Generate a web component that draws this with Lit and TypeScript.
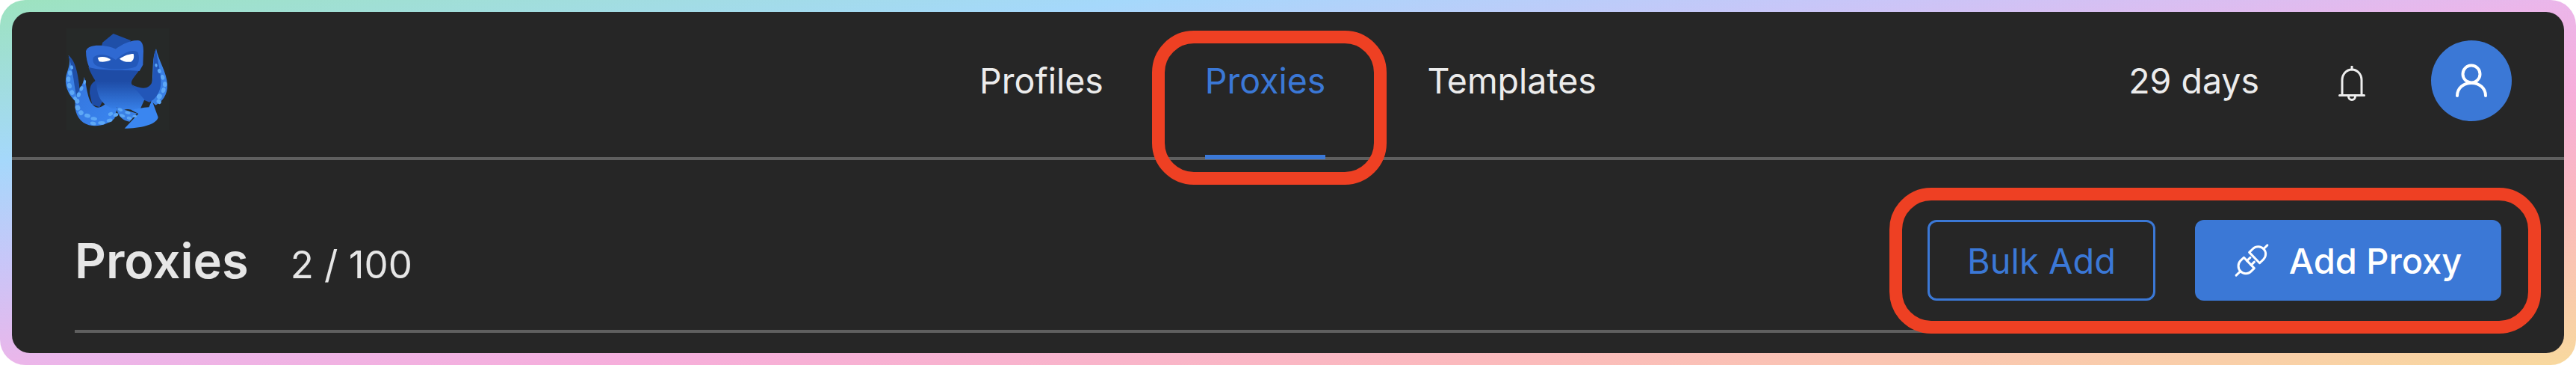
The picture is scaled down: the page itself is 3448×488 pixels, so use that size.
import { LitElement, css, html, svg } from 'lit';
import { customElement } from 'lit/decorators.js';

// sucker dots of the logo tentacles: [cx, cy, rx, ry, rotation]
const SUCKERS: number[][] = [
  [108, 180, 6, 8, -15], [101, 203, 8, 10, -5], [95, 228, 8, 11, 0], [99, 254, 9, 11, -15], [109, 281, 9, 10, -25],
  [122, 305, 7, 8, -35], [160, 240, 5, 9, 10], [147, 265, 7, 10, 20], [136, 290, 8, 10, 15], [130, 316, 9, 10, 0],
  [132, 342, 10, 11, -15], [145, 362, 10, 10, -35], [171, 374, 12, 8, 15], [197, 386, 13, 7, 10], [228, 403, 14, 7, 0],
  [194, 405, 12, 7, 15], [260, 393, 12, 7, -15], [285, 371, 10, 7, -25], [264, 367, 10, 7, -25],
  [303, 350, 10, 6, 25], [311, 374, 11, 6, 20], [333, 362, 11, 6, 15], [339, 384, 10, 6, 15], [361, 376, 9, 5, 0],
  [447, 172, 5, 7, -10], [460, 195, 7, 9, -20], [473, 220, 8, 10, -15], [482, 248, 8, 10, 0], [476, 272, 8, 11, 15],
  [460, 297, 10, 11, 30], [458, 318, 10, 8, 40],
];

@customElement('app-root')
export class AppRoot extends LitElement {
  static styles = css`
    :host {
      display: block;
      width: 3448px;
      height: 488px;
      box-sizing: border-box;
      padding: 16px;
      border-radius: 34px;
      background: linear-gradient(to bottom right, #9de3bf 0%, #a5d8fb 22%, #c8c6f8 36%, #ebb6ea 50%, #f6aedb 62%, #fbb9bd 78%, #f8d99e 100%);
      font-family: Inter, 'Liberation Sans', sans-serif;
      color: #ececec;
    }
    .panel {
      position: relative;
      height: 456px;
      border-radius: 24px;
      background: #262626;
      overflow: hidden;
    }
    .top {
      box-sizing: border-box;
      display: grid;
      grid-template-columns: minmax(0, 1fr) auto minmax(0, 1fr);
      height: 198px;
      padding: 38px 44px 0;
      border-bottom: 4px solid #5f5f5f;
    }
    .logo {
      display: block;
      margin-top: -24px;
    }
    .nav {
      display: flex;
      gap: 136px;
    }
    .nav a {
      box-sizing: border-box;
      height: 159px;
      line-height: 108px;
      font-size: 46.5px;
      border-bottom: 6px solid transparent;
    }
    .nav a.active {
      color: #3b78d6;
      border-bottom-color: #3b78d6;
    }
    .meta {
      display: flex;
      justify-content: flex-end;
      align-items: flex-start;
      padding-right: 26px;
      line-height: 108px;
      font-size: 46.5px;
    }
    .bell {
      display: block;
      margin: 34px 88px 0 106px;
    }
    .avatar {
      display: flex;
      align-items: center;
      justify-content: center;
      width: 108px;
      height: 108px;
      border-radius: 50%;
      background: #3b78d6;
    }
    .content {
      margin: 0 84px;
      padding: 80px 0 39px;
      border-bottom: 4px solid #5f5f5f;
      display: flex;
      align-items: center;
      justify-content: space-between;
    }
    .title {
      display: flex;
      align-items: baseline;
      gap: 56px;
      color: #e6e6e6;
    }
    h1 {
      margin: 0;
      font-size: 65px;
      font-weight: 600;
    }
    .count {
      font-size: 51px;
    }
    .actions {
      display: flex;
      gap: 53px;
    }
    .btn {
      box-sizing: border-box;
      display: flex;
      align-items: center;
      justify-content: center;
      gap: 27px;
      height: 108px;
      border-radius: 12px;
      font-size: 47px;
      font-family: inherit;
    }
    .btn.outline {
      width: 305px;
      border: 3px solid #3b78d6;
      background: transparent;
      color: #3b78d6;
    }
    .btn.solid {
      width: 410px;
      border: 0;
      background: #3b78d6;
      color: #fff;
      font-weight: 500;
    }
    .mark {
      position: absolute;
      box-sizing: border-box;
      border: 17px solid #ee4023;
      border-radius: 56px;
    }
    .mark.nav-mark {
      left: 1526px;
      top: 25px;
      width: 314px;
      height: 206px;
    }
    .mark.btn-mark {
      left: 2513px;
      top: 235px;
      width: 872px;
      height: 195px;
    }
  `;

  logo() {
    return html`<svg class="logo" width="190" height="160" viewBox="0 0 570 480">
      <defs>
        <linearGradient id="body" x1="0" y1="0" x2="0" y2="1">
          <stop offset="0.3" stop-color="#1e4ca6"></stop>
          <stop offset="1" stop-color="#3a86f0"></stop>
        </linearGradient>
        <linearGradient id="arm" x1="0" y1="0" x2="1" y2="1">
          <stop offset="0" stop-color="#3474dc"></stop>
          <stop offset="1" stop-color="#3a86f0"></stop>
        </linearGradient>
      </defs>
      <rect x="85" y="24" width="415" height="410" fill="#262928"></rect>
      ${svg`
        <path d="M95 132C120 160 130 210 140 270L130 322C100 300 80 260 84 225C88 190 108 170 95 132Z" fill="#3a80e4"></path>
        <path d="M95 132C125 155 135 215 140 270L128 300C118 260 115 200 95 132Z" fill="#1f4fa8"></path>
        <path d="M447 106C455 150 490 200 492 250C494 290 470 320 445 332L420 310L430 250C436 190 430 140 447 106Z" fill="#3a80e4"></path>
        <path d="M447 106C450 150 470 210 466 250C460 290 440 310 420 320L395 310L350 250C380 265 420 275 432 235C440 190 430 140 447 106Z" fill="#2256b8"></path>
        <path d="M180 285C180 250 190 240 210 230L240 300L220 340L190 330Z" fill="#1e4ca6"></path>
        <path d="M158 218C172 270 170 320 205 340C225 345 240 330 250 320L290 345L280 385C250 415 190 425 155 402C125 380 115 340 125 305C135 270 156 250 158 218Z" fill="url(#arm)"></path>
        <path d="M285 340L370 365L340 398C315 395 295 380 285 340Z" fill="#3a80e4"></path>
        <path d="M232 80L275 45L345 72L330 105L225 105Z" fill="#1f4fa8"></path>
        <path d="M175 180C190 220 205 230 208 250C210 300 230 330 270 345C280 348 285 345 290 340L300 365C320 340 350 345 375 365L400 310L350 250C340 230 372 210 385 180Z" fill="url(#body)"></path>
        <path d="M320 425L376 366L348 352C370 345 395 342 418 340L430 312L455 380C450 410 380 425 320 425Z" fill="#3a86f0"></path>
        <path d="M165 115C170 98 190 92 215 92C245 92 270 100 285 106C305 92 340 70 375 72C392 75 396 92 396 115L394 170L380 195C340 190 220 195 178 180C170 160 165 140 165 115Z" fill="#2f69d2"></path>
        <path d="M195 140C215 122 250 126 285 150C310 128 345 105 372 118C382 135 380 165 365 178C330 192 235 192 205 172C195 165 190 150 195 140Z" fill="#2358ba"></path>
        <path d="M212 142C232 134 252 140 265 150C250 158 225 160 218 156Z" fill="#fff"></path>
        <path d="M300 146C320 132 340 126 356 126C360 140 356 152 346 158C328 160 312 156 300 146Z" fill="#fff"></path>
        ${SUCKERS.map(
          ([cx, cy, rx, ry, r]) =>
            svg`<ellipse cx=${cx} cy=${cy} rx=${rx} ry=${ry} fill="#5da8f6" transform="rotate(${r} ${cx} ${cy})"></ellipse>`,
        )}
      `}
    </svg>`;
  }

  render() {
    return html`
      <div class="panel">
        <header class="top">
          ${this.logo()}
          <nav class="nav">
            <a>Profiles</a>
            <a class="active">Proxies</a>
            <a>Templates</a>
          </nav>
          <div class="meta">
            <span>29 days</span>
            <svg class="bell" width="36" height="48" viewBox="0 0 36 48" fill="none" stroke="#eee" stroke-width="3" stroke-linecap="round">
              <path d="M18 1V5"></path>
              <path d="M5 39V19C5 11 11 5 18 5S31 11 31 19V39"></path>
              <path d="M1.5 39.5H34.5"></path>
              <path d="M13.5 41A4.5 4.5 0 0 0 22.5 41"></path>
            </svg>
            <div class="avatar">
              <svg width="44" height="46" viewBox="0 0 44 46" fill="none" stroke="#fff" stroke-width="4" stroke-linecap="round">
                <circle cx="22" cy="14" r="11.5"></circle>
                <path d="M3 43C3 33 11 26 22 26S41 33 41 43"></path>
              </svg>
            </div>
          </div>
        </header>
        <section class="content">
          <div class="title">
            <h1>Proxies</h1>
            <span class="count">2 / 100</span>
          </div>
          <div class="actions">
            <button class="btn outline">Bulk Add</button>
            <button class="btn solid">
              <svg width="46" height="46" viewBox="-23 -23 46 46" fill="none" stroke="#fff" stroke-width="3" stroke-linecap="round" stroke-linejoin="round">
                <g transform="rotate(-44)">
                  <path d="M-29 0H-21"></path>
                  <path d="M-5 -10V10H-11A10 10 0 0 1 -11 -10Z"></path>
                  <path d="M-5 -4H1M-5 4H1"></path>
                  <path d="M5 -10H12A10 10 0 0 1 12 10H5Z"></path>
                  <path d="M22 0H29"></path>
                </g>
              </svg>
              <span>Add Proxy</span>
            </button>
          </div>
        </section>
        <div class="mark nav-mark"></div>
        <div class="mark btn-mark"></div>
      </div>
    `;
  }
}
